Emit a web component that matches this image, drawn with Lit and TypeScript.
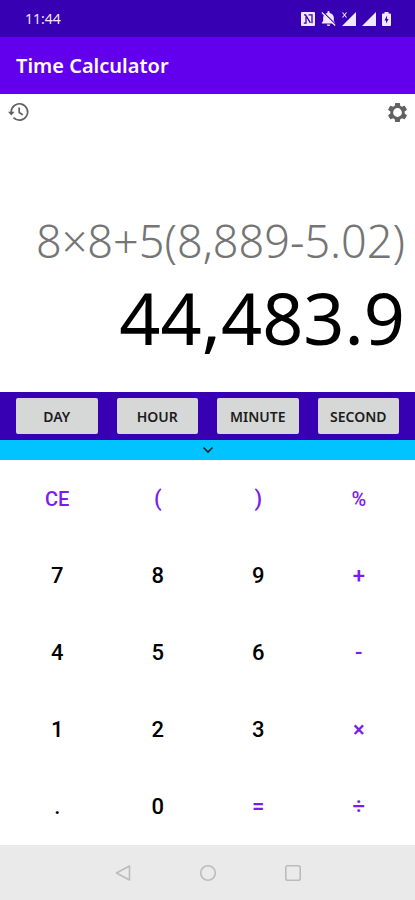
import { LitElement, html, css, svg } from "lit";
import { customElement, state } from "lit/decorators.js";
import { classMap } from "lit/directives/class-map.js";

type Key = { label: string; kind: "digit" | "op"; name?: string };

const KEYS: Key[] = [
  { label: "CE", kind: "op", name: "Clear entry" },
  { label: "(", kind: "op" },
  { label: ")", kind: "op" },
  { label: "%", kind: "op" },
  { label: "7", kind: "digit" },
  { label: "8", kind: "digit" },
  { label: "9", kind: "digit" },
  { label: "+", kind: "op" },
  { label: "4", kind: "digit" },
  { label: "5", kind: "digit" },
  { label: "6", kind: "digit" },
  { label: "-", kind: "op" },
  { label: "1", kind: "digit" },
  { label: "2", kind: "digit" },
  { label: "3", kind: "digit" },
  { label: "×", kind: "op" },
  { label: ".", kind: "digit" },
  { label: "0", kind: "digit" },
  { label: "=", kind: "op" },
  { label: "÷", kind: "op" },
];

const UNITS = ["DAY", "HOUR", "MINUTE", "SECOND"];

const nfc = svg`<path fill="currentColor" d="M1 0h12a1 1 0 0 1 1 1v12a1 1 0 0 1-1 1H1a1 1 0 0 1-1-1V1a1 1 0 0 1 1-1z"/>
  <path fill="none" stroke="#3700b3" stroke-width="1.3" d="M2.800 11.200H5V4.500M3 2.800h1.600l4.800 8M7.500 2.800H11v8.400"/>`;
const bellOff = svg`<path fill="currentColor" d="M7 14a1.600 1.600 0 0 0 1.600-1.500H5.400A1.600 1.600 0 0 0 7 14zM2 9.400V6.200C2 4 4 2.400 6 1.900V1a1 1 0 0 1 2 0v.9c2 .5 4 2.100 4 4.300v3.200l1.200 1.500v.8H.800v-.8z"/>
  <path stroke="#3700b3" stroke-width="1" d="M1.700 .7l12.400 12.200"/>
  <path stroke="currentColor" stroke-width="1.200" d="M.8 1.400l12.400 12.200"/>`;
const signalX = svg`<path fill="currentColor" d="M14 0v14H0z"/>
  <path fill="none" stroke="#3700b3" stroke-width="3" d="M0 0l5 5M5 0L0 5"/>
  <path fill="none" stroke="currentColor" stroke-width="1.100" d="M.5 .5l4 5M4.500 .5l-4 5"/>`;
const signal = svg`<path fill="currentColor" d="M14 0v14H0z"/>`;
const battery = svg`<path fill="currentColor" d="M2.500 1.400V0h4v1.400H8a1 1 0 0 1 1 1V13a1 1 0 0 1-1 1H1a1 1 0 0 1-1-1V2.400a1 1 0 0 1 1-1z"/>
  <path fill="#3700b3" d="M5 3.600L2.500 8.400h1.500v3.200L6.600 7H5z"/>`;

@customElement("app-root")
export class AppRoot extends LitElement {
  @state() private expression = "8×8+5(8,889-5.02)";
  @state() private result = "44,483.9";

  static styles = css`
    :host {
      display: flex;
      flex-direction: column;
      min-height: 100vh;
      background: #fff;
      color: #000;
      font-family: "Noto Sans", "Open Sans", sans-serif;
    }
    svg {
      display: block;
    }
    button {
      margin: 0;
      padding: 0;
      border: 0;
      background: none;
      color: inherit;
      font: inherit;
      cursor: pointer;
    }
    .status {
      display: flex;
      align-items: center;
      justify-content: space-between;
      height: 37px;
      padding: 0 24px 0 25px;
      background: #3700b3;
      color: #f0e8ff;
      font-size: 14px;
    }
    .status-icons {
      display: flex;
      align-items: center;
      gap: 6px;
    }
    .appbar {
      display: flex;
      align-items: center;
      height: 57px;
      padding: 0 16px;
      background: #6200ee;
      color: #fff;
    }
    .title {
      margin: 0;
      font-size: 20px;
      font-weight: 600;
    }
    .display {
      flex: 1;
      display: flex;
      flex-direction: column;
    }
    .tools {
      display: flex;
      align-items: center;
      justify-content: space-between;
      padding: 6px 6px 0 7px;
      color: #616161;
    }
    .readout {
      flex: 1;
      display: flex;
      flex-direction: column;
      justify-content: flex-end;
      align-items: flex-end;
      padding: 0 10px 27px;
      text-align: right;
    }
    .expression {
      font-size: 45px;
      line-height: 56px;
      font-weight: 300;
      color: #757575;
    }
    .result {
      font-size: 72px;
      line-height: 96px;
    }
    .units {
      display: grid;
      grid-template-columns: repeat(4, 1fr);
      gap: 19px;
      padding: 6px 16px;
      background: #3700b3;
    }
    .unit {
      height: 36px;
      border-radius: 2px;
      background: #d6d7d7;
      font-size: 14px;
      font-weight: 600;
      color: #1c1c1c;
    }
    .collapse {
      display: flex;
      align-items: center;
      justify-content: center;
      height: 20px;
      background: #00c3ff;
      color: #10222b;
    }
    .keypad {
      display: grid;
      grid-template-columns: repeat(4, 1fr);
      grid-auto-rows: 77px;
      padding: 0 6px 0 7px;
    }
    .key {
      font-family: Roboto, sans-serif;
      font-size: 22px;
      font-weight: 500;
    }
    .key.op {
      color: #7a1cf0;
    }
    .key.word {
      font-size: 20px;
    }
    .nav {
      display: flex;
      align-items: center;
      justify-content: center;
      gap: 65px;
      height: 55px;
      background: #eaeaea;
      color: #bcbcbc;
    }
  `;

  private press(key: Key) {
    if (key.label === "CE") {
      this.expression = "";
      this.result = "";
    } else if (key.label !== "=") {
      this.expression += key.label;
    }
  }

  render() {
    return html`
      <div class="status">
        <span>11:44</span>
        <div class="status-icons">
          <svg width="14" height="14" viewBox="0 0 14 14">${nfc}</svg>
          <svg width="15" height="15" viewBox="0 0 14 14">${bellOff}</svg>
          <svg width="14" height="14" viewBox="0 0 14 14">${signalX}</svg>
          <svg width="14" height="14" viewBox="0 0 14 14">${signal}</svg>
          <svg width="9" height="14" viewBox="0 0 9 14">${battery}</svg>
        </div>
      </div>
      <header class="appbar"><h1 class="title">Time Calculator</h1></header>
      <main class="display">
        <div class="tools">
          <button aria-label="History">
            <svg width="24" height="24" viewBox="0 0 24 24" fill="none" stroke="currentColor" stroke-width="1.700">
              <path d="M4.200 13.500V12a8.200 8.200 0 1 1 2.300 5.700" />
              <path d="M12.200 7.500v5l3.600 2.200" />
              <path fill="currentColor" stroke="none" d="M1 11.800h6.600L4.300 15.400z" />
            </svg>
          </button>
          <button aria-label="Settings">
            <svg width="23" height="23" viewBox="0 0 24 24" fill="currentColor">
              <path
                d="M19.430 12.980c.04-.32.07-.64.07-.98 0-.34-.03-.66-.07-.98l2.110-1.650c.19-.15.24-.42.12-.64l-2-3.460c-.09-.16-.26-.25-.44-.25-.06 0-.12.010-.17.030l-2.490 1c-.52-.4-1.080-.73-1.690-.98l-.38-2.650C14.460 2.180 14.250 2 14 2h-4c-.25 0-.46.180-.49.420l-.38 2.650c-.61.250-1.170.590-1.690.98l-2.490-1c-.06-.02-.12-.03-.18-.03-.17 0-.34.090-.43.250l-2 3.460c-.13.220-.07.490.120.640l2.110 1.650c-.04.320-.07.650-.07.980 0 .33.030.66.070.98l-2.110 1.650c-.19.150-.24.420-.12.640l2 3.460c.09.160.26.250.44.250.06 0 .12-.01.17-.03l2.490-1c.52.4 1.080.73 1.690.98l.38 2.650c.03.240.24.420.49.420h4c.25 0 .46-.18.49-.42l.38-2.650c.61-.25 1.170-.59 1.690-.98l2.490 1c.06.020.12.030.18.030.17 0 .34-.09.43-.25l2-3.460c.12-.22.070-.49-.12-.64l-2.110-1.650zM12 16.600a4.600 4.600 0 1 1 0-9.200 4.600 4.600 0 0 1 0 9.200z"
              />
            </svg>
          </button>
        </div>
        <div class="readout">
          <div class="expression">${this.expression}</div>
          <output class="result">${this.result}</output>
        </div>
      </main>
      <div class="units">
        ${UNITS.map((u) => html`<button class="unit">${u}</button>`)}
      </div>
      <button class="collapse" aria-label="Collapse keypad">
        <svg width="12" height="8" viewBox="0 0 12 8" fill="none" stroke="currentColor" stroke-width="1.600">
          <path d="M1.500 1.500L6 6l4.500-4.500" />
        </svg>
      </button>
      <div class="keypad">
        ${KEYS.map(
          (k) => html`<button
            class=${classMap({
              key: true,
              op: k.kind === "op",
              word: k.label === "CE" || k.label === "%",
            })}
            aria-label=${k.name ?? k.label}
            @click=${() => this.press(k)}
          >${k.label}</button>`
        )}
      </div>
      <nav class="nav">
        <button aria-label="Back">
          <svg width="20" height="20" viewBox="0 0 20 20" fill="none" stroke="currentColor" stroke-width="1.600" stroke-linejoin="round">
            <path d="M16.500 3v14L3.500 10z" />
          </svg>
        </button>
        <button aria-label="Home">
          <svg width="20" height="20" viewBox="0 0 20 20" fill="none" stroke="currentColor" stroke-width="1.600">
            <circle cx="10" cy="10" r="7.300" />
          </svg>
        </button>
        <button aria-label="Recent apps">
          <svg width="20" height="20" viewBox="0 0 20 20" fill="none" stroke="currentColor" stroke-width="1.600">
            <rect x="2.800" y="2.800" width="14.400" height="14.400" rx="1.800" />
          </svg>
        </button>
      </nav>
    `;
  }
}
